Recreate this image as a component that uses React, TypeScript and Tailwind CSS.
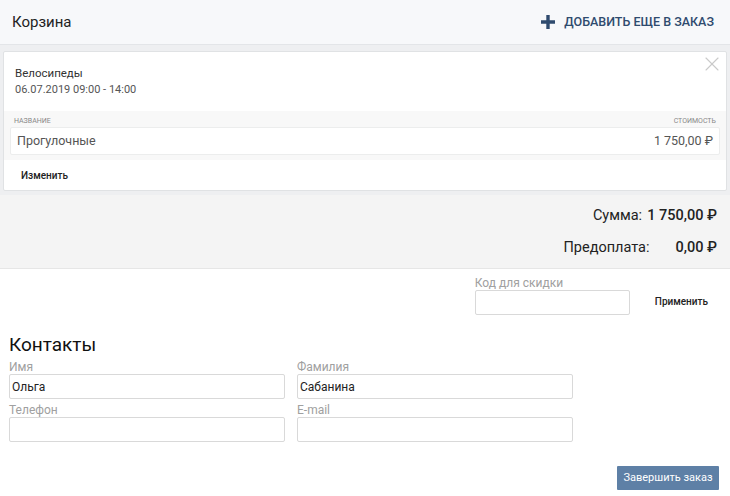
import { X } from "lucide-react";

function Field({ label, value, className }: { label: string; value?: string; className?: string }) {
  return (
    <div className={`flex flex-col ${className ?? ""}`}>
      <label className="text-[12px] leading-[14px] text-[#a0a0a0]">{label}</label>
      <div className="flex h-[25px] items-center rounded-[2px] border border-[#d9d9d9] bg-white px-[2px] text-[12px] text-[#222]">
        {value}
      </div>
    </div>
  );
}

export default function App() {
  return (
    <div
      className="h-[496px] w-[730px] overflow-hidden bg-white"
      style={{ fontFamily: "Roboto, 'Liberation Sans', sans-serif" }}
    >
      <header className="flex h-[45px] items-center justify-between border-b border-[#e3e5e8] bg-[#f7f8fa] pl-[12px] pr-[16px]">
        <h1 className="text-[15px] text-[#222]">Корзина</h1>
        <button type="button" className="flex items-center gap-[9px] text-[12.5px] font-medium uppercase text-[#2f4b6e]">
          <svg width="14" height="14" viewBox="0 0 14 14">
            <path d="M5.3 0h3.4v5.3H14v3.4H8.7V14H5.3V8.7H0V5.3h5.3z" fill="#2f4b6e" />
          </svg>
          Добавить еще в заказ
        </button>
      </header>

      <div className="bg-[#eeeff1] px-[3px] pb-[4px] pt-[6px]">
        <div className="relative rounded-[2px] border border-[#e0e2e4] bg-white">
          <X className="absolute right-[2px] top-0 h-[24px] w-[24px] text-[#cacaca]" strokeWidth={1.1} />
          <div className="px-[11px] pb-[13px] pt-[13px]">
            <p className="text-[11.5px] leading-[16px] text-[#333]">Велосипеды</p>
            <p className="mt-[1px] text-[11px] leading-[16px] text-[#555]">06.07.2019 09:00 - 14:00</p>
          </div>
          <div className="bg-[#f8f8f8] px-[6px] pb-[5px] pt-[5px]">
            <div className="flex justify-between px-[4px] text-[7px] uppercase leading-[10px] text-[#888]">
              <span>Название</span>
              <span>Стоимость</span>
            </div>
            <div className="mt-[1px] flex h-[28px] items-center justify-between rounded-[2px] border border-[#eceded] bg-white px-[6px] text-[12.5px] text-[#555]">
              <span>Прогулочные</span>
              <span>1 750,00 ₽</span>
            </div>
          </div>
          <div className="flex h-[30px] items-center pl-[17px]">
            <button type="button" className="text-[10px] font-medium text-[#222]">
              Изменить
            </button>
          </div>
        </div>
      </div>

      <div className="flex flex-col items-end gap-[11px] border-b border-[#e6e6e6] bg-[#f4f4f4] px-[13px] pb-[10px] pt-[10px] text-[14.5px] text-[#222]">
        <div className="flex h-[21px] items-center gap-[5px]">
          <span>Сумма:</span>
          <span className="font-medium">1 750,00 ₽</span>
        </div>
        <div className="flex h-[21px] items-center gap-[26px]">
          <span>Предоплата:</span>
          <span className="font-medium">0,00 ₽</span>
        </div>
      </div>

      <div className="flex items-end justify-end pr-[22px] pt-[7px]">
        <Field label="Код для скидки" className="w-[155px]" />
        <button type="button" className="mb-[6px] ml-[25px] text-[10px] font-medium text-[#222]">
          Применить
        </button>
      </div>

      <div className="px-[9px] pt-[19px]">
        <h2 className="text-[19px] leading-[22px] text-[#111]">Контакты</h2>
        <div className="mt-[4px] grid w-[564px] grid-cols-2 gap-x-[12px] gap-y-[4px]">
          <Field label="Имя" value="Ольга" />
          <Field label="Фамилия" value="Сабанина" />
          <Field label="Телефон" />
          <Field label="E-mail" />
        </div>
      </div>

      <div className="flex justify-end pr-[11px] pt-[24px]">
        <button
          type="button"
          className="h-[24px] w-[102px] rounded-[1px] bg-[#5e80a6] text-[11px] text-white"
        >
          Завершить заказ
        </button>
      </div>
    </div>
  );
}
